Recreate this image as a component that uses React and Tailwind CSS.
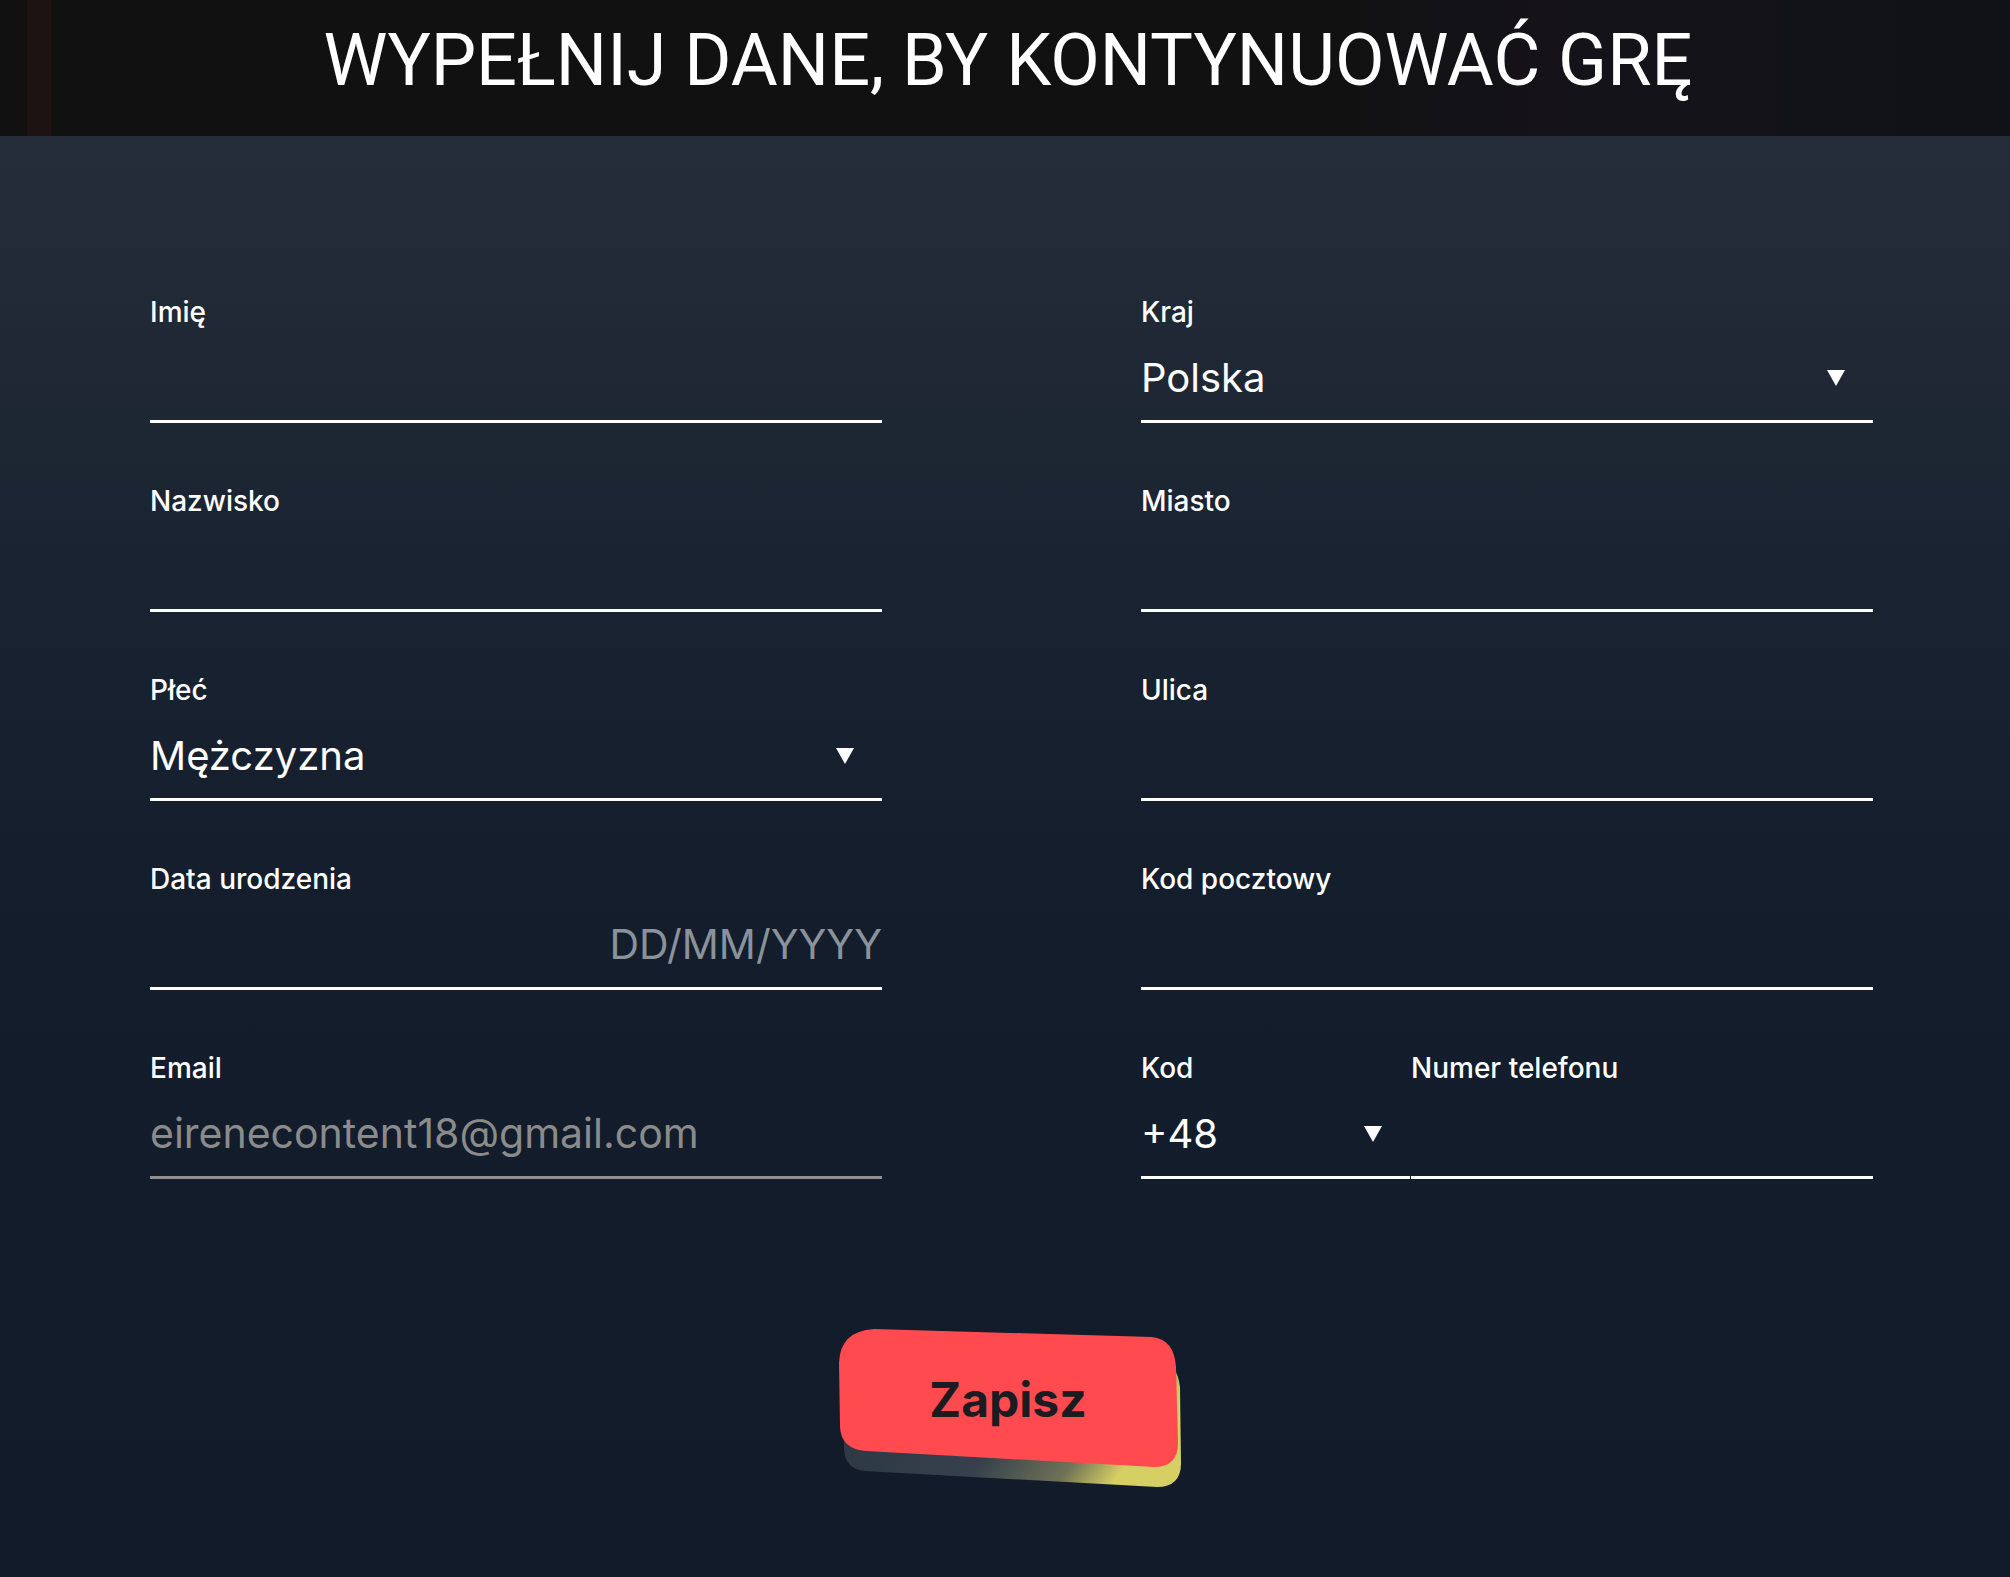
import React from "react";

function Arrow() {
  return (
    <svg width="20" height="18" viewBox="0 0 20 18" className="shrink-0">
      <polygon points="1,1 19,1 10,17" fill="#ffffff" />
    </svg>
  );
}

function Field({ label, children, underline = "border-white", className = "" }) {
  return (
    <div className={"flex flex-col " + className}>
      <div className="h-[32px] text-[28px] leading-[32px] font-medium text-white">{label}</div>
      <div className={"mt-[7px] h-[88px] border-b-[3px] flex items-center " + underline}>
        {children}
      </div>
    </div>
  );
}

function SelectValue({ value }) {
  return (
    <div className="flex w-full items-center justify-between pr-[27px]">
      <span className="text-[40px] leading-none text-white">{value}</span>
      <Arrow />
    </div>
  );
}

export default function App() {
  return (
    <div
      className="min-h-screen w-full flex flex-col"
      style={{ fontFamily: "Inter, 'Noto Sans', sans-serif" }}
    >
      <header className="relative h-[136px] bg-[#111111] flex items-center justify-center overflow-hidden">
        <div className="absolute left-[27px] top-0 h-full w-[24px] bg-[#1d1313]" />
        <div className="absolute right-0 top-0 h-full w-[700px] bg-[linear-gradient(90deg,#111111,#15131a_40%,#101218)]" />
        <h1
          className="relative text-[72px] leading-none text-white pb-[14px] pl-[6px]"
          style={{ fontFamily: "Roboto, 'Liberation Sans', sans-serif" }}
        >
          WYPEŁNIJ DANE, BY KONTYNUOWAĆ GRĘ
        </h1>
      </header>

      <main className="flex-1 flex flex-col bg-[linear-gradient(180deg,#252d3a_0%,#1a2331_30%,#141d2b_55%,#121b29_100%)]">
        <div className="pt-[160px] pl-[150px] grid grid-cols-[732px_732px] gap-x-[259px]">
          <div className="flex flex-col gap-y-[62px]">
            <Field label="Imię" />
            <Field label="Nazwisko" />
            <Field label="Płeć">
              <SelectValue value="Mężczyzna" />
            </Field>
            <Field label="Data urodzenia">
              <div className="w-full text-right text-[41px] leading-none text-[#8a929c]">DD/MM/YYYY</div>
            </Field>
            <Field label="Email" underline="border-[#8f8f8f]">
              <span className="text-[41px] leading-none text-[#8b8b8b]">eirenecontent18@gmail.com</span>
            </Field>
          </div>
          <div className="flex flex-col gap-y-[62px]">
            <Field label="Kraj">
              <SelectValue value="Polska" />
            </Field>
            <Field label="Miasto" />
            <Field label="Ulica" />
            <Field label="Kod pocztowy" />
            <div className="flex">
              <Field label="Kod" className="w-[269px]">
                <SelectValue value="+48" />
              </Field>
              <Field label="Numer telefonu" className="flex-1 ml-[1px]" />
            </div>
          </div>
        </div>

        <div className="flex justify-center pt-[148px] pb-[80px] pl-[12px]">
          <button className="relative w-[346px] h-[164px]">
            <svg className="absolute inset-0" width="346" height="164" viewBox="0 0 346 164">
              <defs>
                <linearGradient id="sh" x1="0" y1="0" x2="1" y2="0.3">
                  <stop offset="0" stopColor="#2a3442" />
                  <stop offset="0.6" stopColor="#36414d" />
                  <stop offset="0.85" stopColor="#6f7256" />
                  <stop offset="1" stopColor="#d6cf63" />
                </linearGradient>
              </defs>
              <path
                d="M 5 50 Q 5 26 33 24 L 319 32 Q 339 34 342 60 L 343 136 Q 343 160 319 160 L 27 144 Q 7 142 6 122 Z"
                fill="url(#sh)"
              />
              <path
                d="M 1 36 Q 2 4 36 2 L 314 10 Q 336 12 338 40 L 340 116 Q 340 140 316 140 L 28 124 Q 3 122 2 100 Z"
                fill="#ff4b4f"
              />
            </svg>
            <span className="absolute left-0 right-[6px] top-[49px] text-center text-[48px] leading-none font-bold text-[#1b1c22]">
              Zapisz
            </span>
          </button>
        </div>
      </main>
    </div>
  );
}
